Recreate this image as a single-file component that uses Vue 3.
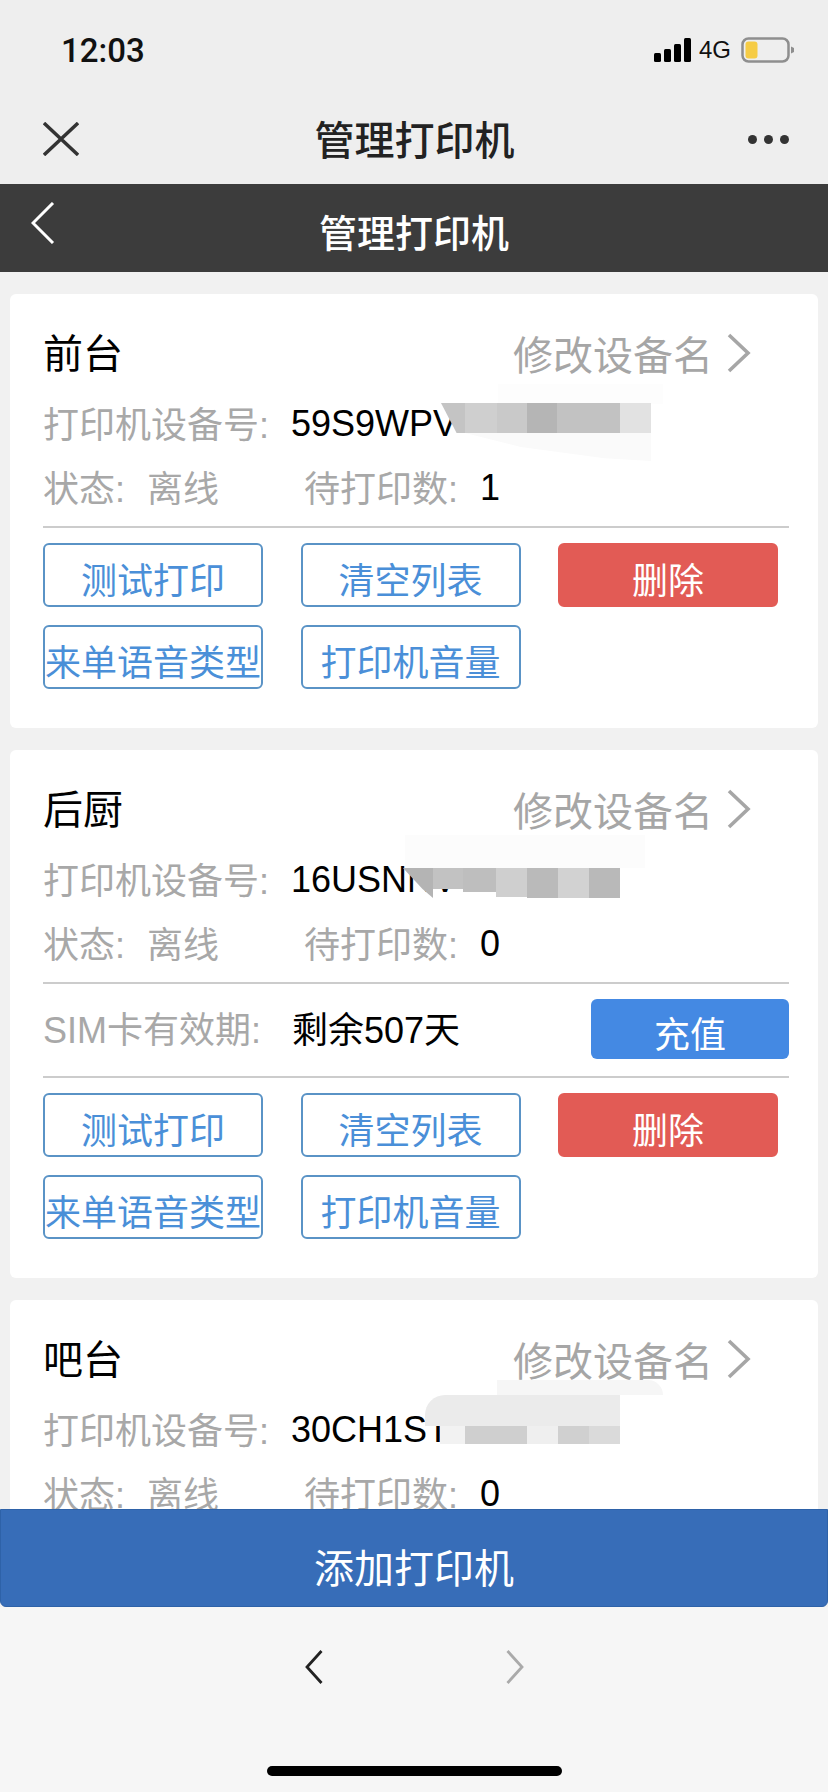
<template>
    <div class="page">
        <!-- Phone status bar + wechat title -->
        <header class="top">
            <div class="status-bar">
                <span class="time">12:03</span>
                <div class="status-right">
                    <svg class="signal" width="37" height="24" viewBox="0 0 37 24">
                        <rect x="0" y="15" width="7" height="9" rx="1.5" />
                        <rect x="10" y="11" width="7" height="13" rx="1.5" />
                        <rect x="20" y="6" width="7" height="18" rx="1.5" />
                        <rect x="30" y="0" width="7" height="24" rx="1.5" />
                    </svg>
                    <span class="net">4G</span>
                    <svg class="battery" width="53" height="26" viewBox="0 0 53 26">
                        <rect x="1.5" y="1.5" width="46" height="23" rx="6" fill="none" stroke="#8e8e8e" stroke-width="2.5" />
                        <rect x="4.5" y="4.5" width="12" height="17" rx="3" fill="#f6cc45" />
                        <path d="M50 9.5 L53 11 V15 L50 16.5 Z" fill="#8e8e8e" />
                    </svg>
                </div>
            </div>
            <div class="wx-bar">
                <svg class="wx-close" width="36" height="34" viewBox="0 0 36 34">
                    <path d="M1 1 L35 33 M35 1 L1 33" fill="none" stroke="#333" stroke-width="3.4" />
                </svg>
                <div class="wx-title">管理打印机</div>
                <div class="wx-more"><i></i><i></i><i></i></div>
            </div>
        </header>

        <div class="app-bar">
            <svg class="back" width="24" height="42" viewBox="0 0 24 42">
                <polyline points="22,1 2,21 22,41" fill="none" stroke="#fff" stroke-width="3" />
            </svg>
            <div class="app-title">管理打印机</div>
        </div>

        <main class="list">
            <section v-for="item in printers" :key="item.name" class="card">
                <div class="card-head">
                    <span class="name">{{ item.name }}</span>
                    <a class="rename">
                        修改设备名
                        <svg width="24" height="40" viewBox="0 0 24 40">
                            <polyline points="2,2 21,20 2,38" fill="none" stroke="#a6a6a6" stroke-width="3.6" />
                        </svg>
                    </a>
                </div>
                <div class="row device">
                    <span class="label">打印机设备号:</span>
                    <span class="value">{{ item.code }}</span>
                </div>
                <div class="row status">
                    <span class="status-cell">
                        <span class="label">状态:</span>
                        <span class="label">离线</span>
                    </span>
                    <span class="label">待打印数:</span>
                    <span class="value">{{ item.pending }}</span>
                </div>

                <template v-if="!item.clipped">
                    <div class="line"></div>
                    <template v-if="item.sim">
                        <div class="sim">
                            <span class="label">SIM卡有效期:</span>
                            <span class="value">{{ item.sim }}</span>
                            <button class="recharge">充值</button>
                        </div>
                        <div class="line"></div>
                    </template>
                    <div class="actions">
                        <button class="btn">测试打印</button>
                        <button class="btn">清空列表</button>
                        <button class="btn danger">删除</button>
                        <button class="btn">来单语音类型</button>
                        <button class="btn">打印机音量</button>
                    </div>
                </template>

                <!-- mosaic over the serial number -->
                <i
                    v-for="(m, idx) in item.mask"
                    :key="idx"
                    class="mosaic"
                    :style="{
                        left: m[0] + 'px',
                        top: m[1] + 'px',
                        width: m[2] + 'px',
                        height: m[3] + 'px',
                        background: m[4],
                        clipPath: m[5] || 'none',
                        borderRadius: m[6] || '0'
                    }"
                ></i>
            </section>
        </main>

        <button class="add">添加打印机</button>

        <footer class="bottom">
            <div class="arrows">
                <svg width="18" height="34" viewBox="0 0 18 34">
                    <polyline points="16.5,1 2,17 16.5,33" fill="none" stroke="#222" stroke-width="2.8" />
                </svg>
                <svg width="18" height="34" viewBox="0 0 18 34">
                    <polyline points="1.5,1 16,17 1.5,33" fill="none" stroke="#aaa" stroke-width="2.8" />
                </svg>
            </div>
            <div class="home-bar"></div>
        </footer>
    </div>
</template>

<script setup>
// [left, top, width, height, colour, clip, radius] relative to the card
const printers = [
    {
        name: '前台',
        code: '59S9WPV',
        pending: 1,
        mask: [
            [488, 90, 165, 20, '#fdfdfd'],
            [455, 139, 186, 28, '#fafafa', 'polygon(0 0, 100% 0, 100% 100%, 75% 90%, 30% 50%)'],
            [431, 109, 24, 30, '#c4c4c4', 'polygon(0 0, 100% 0, 100% 100%, 65% 100%)'],
            [455, 109, 32, 30, '#cfcfcf'],
            [487, 109, 30, 30, '#c9c9c9'],
            [517, 109, 30, 30, '#b5b5b5'],
            [547, 109, 63, 30, '#c2c2c2'],
            [610, 109, 31, 30, '#e2e2e2']
        ]
    },
    {
        name: '后厨',
        code: '16USNNV',
        pending: 0,
        sim: '剩余507天',
        mask: [
            [395, 85, 240, 33, '#fcfcfc'],
            [393, 118, 30, 30, '#b4b4b4', 'polygon(0 0, 100% 0, 100% 100%, 65% 70%)'],
            [423, 118, 30, 21, '#c2c2c2'],
            [453, 118, 33, 24, '#bebebe'],
            [486, 118, 31, 29, '#cfcfcf'],
            [517, 118, 31, 30, '#bababa'],
            [548, 118, 31, 30, '#d2d2d2'],
            [579, 118, 31, 30, '#b9b9b9']
        ]
    },
    {
        name: '吧台',
        code: '30CH1ST',
        pending: 0,
        clipped: true,
        mask: [
            [487, 80, 166, 15, '#f6f6f6', null, '0 20px 0 0'],
            [415, 95, 195, 31, '#ebebeb', null, '20px 0 0 0'],
            [430, 126, 25, 18, '#f2f2f2'],
            [455, 126, 62, 18, '#cfcfcf'],
            [517, 126, 31, 18, '#efefef'],
            [548, 126, 31, 18, '#d0d0d0'],
            [579, 126, 31, 18, '#dadada']
        ]
    }
]
</script>

<style scoped>
.page {
    display: flex;
    flex-direction: column;
    height: 1792px;
    overflow: hidden;
    background: #f1f1f1;
    color: #000;
    font-family: "Liberation Sans", "Noto Sans CJK SC", sans-serif;
}

.top {
    flex: none;
    height: 184px;
    background: #eeeeee;
}

.status-bar {
    display: flex;
    justify-content: space-between;
    align-items: center;
    height: 40px;
    padding: 30px 34px 24px 61px;
}

.time {
    font-family: Roboto, sans-serif;
    font-size: 33px;
    font-weight: 500;
    color: #111;
}

.status-right {
    display: flex;
    align-items: center;
}

.signal {
    fill: #000;
}

.net {
    margin: 0 10px 0 8px;
    font-size: 24px;
    color: #111;
}

.wx-bar {
    display: grid;
    grid-template-columns: 1fr auto 1fr;
    align-items: center;
    height: 90px;
    padding: 0 39px 0 43px;
}

.wx-title {
    margin: -3px 0 0 -3px;
    font-size: 40px;
    font-weight: 500;
    color: #222;
}

.wx-more {
    display: flex;
    justify-content: flex-end;
    gap: 7px;
}

.wx-more i {
    width: 9px;
    height: 9px;
    border-radius: 50%;
    background: #333;
}

.app-bar {
    display: grid;
    flex: none;
    grid-template-columns: 1fr auto 1fr;
    height: 88px;
    background: #3c3c3c;
}

.back {
    margin: 18px 0 0 31px;
}

.app-title {
    margin-top: 27px;
    font-size: 38px;
    font-weight: 500;
    line-height: 46px;
    color: #fff;
}

.list {
    flex: 1;
    min-height: 0;
    overflow: hidden;
    padding: 22px 10px 0;
}

.card {
    position: relative;
    margin-bottom: 22px;
    padding: 32px 29px 39px 33px;
    border-radius: 6px;
    background: #fff;
}

.card-head {
    display: flex;
    justify-content: space-between;
    align-items: center;
    height: 50px;
}

.name {
    font-size: 40px;
}

.rename {
    display: flex;
    align-items: center;
    gap: 14px;
    margin: 4px 38px 0 0;
    font-size: 40px;
    color: #a6a6a6;
}

.row {
    display: flex;
    align-items: center;
    gap: 22px;
    height: 50px;
    font-size: 36px;
    white-space: nowrap;
}

.row .value {
    margin-top: 4px;
}

.device {
    margin-top: 21px;
}

.status {
    margin-top: 14px;
}

.status-cell {
    display: flex;
    gap: 22px;
    width: 239px;
}

.label {
    color: #a8a8a8;
}

.value {
    color: #000;
}

.line {
    height: 2px;
    margin-top: 15px;
    background: #cccccc;
}

.sim {
    display: flex;
    align-items: center;
    height: 60px;
    padding-top: 15px;
    padding-bottom: 17px;
    font-size: 36px;
}

.sim .label {
    width: 249px;
    margin-top: -4px;
    white-space: nowrap;
}

.sim .value {
    margin-top: -4px;
}

.sim + .line {
    margin-top: 0;
}

.recharge {
    width: 198px;
    height: 60px;
    margin-left: auto;
    padding: 6px 0 0;
    border: none;
    border-radius: 6px;
    background: #4489e3;
    color: #fff;
    font: inherit;
}

.actions {
    display: grid;
    grid-template-columns: repeat(3, 220px);
    gap: 18px 37.5px;
    margin-top: 15px;
}

.btn {
    display: flex;
    justify-content: center;
    align-items: center;
    height: 64px;
    padding: 6px 0 0;
    border: 2px solid #5a93c6;
    border-radius: 6px;
    background: #fff;
    color: #4a8fd8;
    font-family: inherit;
    font-size: 36px;
    white-space: nowrap;
}

.btn.danger {
    border-color: #e25b55;
    background: #e25b55;
    color: #fff;
}

.mosaic {
    position: absolute;
    display: block;
}

.add {
    flex: none;
    position: relative;
    width: 100%;
    height: 98px;
    padding: 15px 0 0;
    border: 1px solid #2e62a8;
    border-radius: 0 0 6px 6px;
    background: #376db8;
    color: #fff;
    font-family: inherit;
    font-size: 40px;
}

.bottom {
    display: flex;
    flex: none;
    flex-direction: column;
    align-items: center;
    height: 185px;
    background: #f6f6f6;
}

.arrows {
    display: flex;
    gap: 183px;
    margin-top: 43px;
}

.home-bar {
    width: 295px;
    height: 10px;
    margin-top: 82px;
    border-radius: 5px;
    background: #000;
}
</style>

<style>
body {
    background: #f6f6f6;
}
</style>
